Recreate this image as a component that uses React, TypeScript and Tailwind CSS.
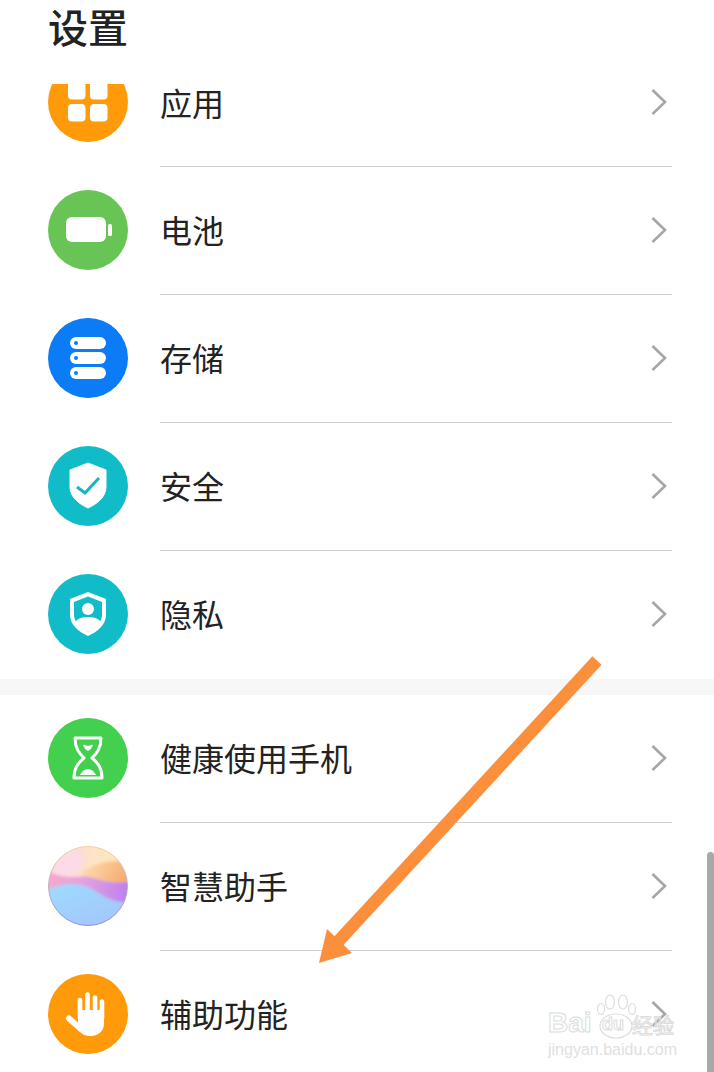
import type { ReactNode } from "react";

const Circle = ({ fill, children }: { fill: string; children: ReactNode }) => (
  <svg width="80" height="80" viewBox="0 0 80 80" className="shrink-0">
    <circle cx="40" cy="40" r="40" fill={fill} />
    {children}
  </svg>
);

const AppsIcon = () => (
  <Circle fill="#ff9a0b">
    <rect x="20" y="20" width="17.5" height="17.5" rx="4" fill="#fff" />
    <rect x="42" y="20" width="17.5" height="17.5" rx="4" fill="#fff" />
    <rect x="20" y="42" width="17.5" height="17.5" rx="4" fill="#fff" />
    <rect x="42" y="42" width="17.5" height="17.5" rx="4" fill="#fff" />
  </Circle>
);

const BatteryIcon = () => (
  <Circle fill="#68c455">
    <rect x="18" y="27" width="40" height="25" rx="6" fill="#fff" />
    <rect x="60" y="34" width="4" height="12" rx="1.5" fill="#fff" />
  </Circle>
);

const StorageIcon = () => (
  <Circle fill="#0b7bf6">
    <rect x="22" y="19" width="36" height="12" rx="6" fill="#fff" />
    <rect x="22" y="34" width="36" height="12" rx="6" fill="#fff" />
    <rect x="22" y="49" width="36" height="12" rx="6" fill="#fff" />
    <circle cx="28" cy="25" r="2" fill="#0b7bf6" />
    <circle cx="28" cy="40" r="2" fill="#0b7bf6" />
    <circle cx="28" cy="55" r="2" fill="#0b7bf6" />
  </Circle>
);

const SecurityIcon = () => (
  <Circle fill="#0fbcc8">
    <path d="M40 17 L58 24 V41 C58 51 49 58 40 62 C31 58 22 51 22 41 V24 Z" fill="#fff" stroke="#fff" strokeWidth="1" strokeLinejoin="round" />
    <path d="M29 41 L37 47 L51 32" fill="none" stroke="#17b5c0" strokeWidth="3" />
  </Circle>
);

const PrivacyIcon = () => (
  <Circle fill="#0fbcc8">
    <path d="M40 18 L58 25 V41 C58 51 49 58 40 62 C31 58 22 51 22 41 V25 Z" fill="#fff" />
    <path d="M40 22.5 L54 28 V41 C54 48 47 54 40 58 C33 54 26 48 26 41 V28 Z" fill="#0fbcc8" />
    <circle cx="40" cy="35" r="6" fill="#fff" />
    <path d="M27 48 C30 44 35 43 40 43 C45 43 50 44 53 48 C50 53 45 56 40 58 C35 56 30 53 27 48 Z" fill="#fff" />
  </Circle>
);

const HourglassIcon = () => (
  <Circle fill="#43d04f">
    <path d="M27 20 H53 C53 30 49 35 44 40 C50 45 54 50 54 60 H26 C26 50 30 45 36 40 C31 35 27 30 27 20 Z" fill="none" stroke="#fff" strokeWidth="3" strokeLinejoin="round" />
    <path d="M35 27 C37 26 38 28 40 28 C42 28 43 26 45 27 C44 30 42 32 40 33 C38 32 36 30 35 27 Z" fill="#fff" />
    <path d="M32 57 C34 53 37 51 40 51 C43 51 46 53 48 57 Z" fill="#fff" />
  </Circle>
);

const AssistantIcon = () => (
  <svg width="80" height="80" viewBox="0 0 80 80" className="shrink-0">
    <defs>
      <clipPath id="orb">
        <circle cx="40" cy="40" r="39.5" />
      </clipPath>
      <filter id="soft" x="-10%" y="-10%" width="120%" height="120%">
        <feGaussianBlur stdDeviation="1.6" />
      </filter>
      <linearGradient id="orbTop" x1="0" y1="0" x2="1" y2="0.2">
        <stop offset="0" stopColor="#fbc9d8" />
        <stop offset="0.55" stopColor="#fde3c8" />
        <stop offset="1" stopColor="#fdeab0" />
      </linearGradient>
      <linearGradient id="orbWarm" x1="0" y1="0" x2="1" y2="0.3">
        <stop offset="0" stopColor="#fce0b4" />
        <stop offset="1" stopColor="#f7a96c" />
      </linearGradient>
      <linearGradient id="orbMid" x1="0" y1="0" x2="1" y2="0">
        <stop offset="0" stopColor="#f8a9c9" />
        <stop offset="0.45" stopColor="#e2a2e0" />
        <stop offset="1" stopColor="#b97cf2" />
      </linearGradient>
      <linearGradient id="orbLow" x1="0" y1="0" x2="0.7" y2="1">
        <stop offset="0" stopColor="#9cdcff" />
        <stop offset="1" stopColor="#a6c4fb" />
      </linearGradient>
      <linearGradient id="orbRim" x1="0" y1="0" x2="0" y2="1">
        <stop offset="0" stopColor="#f0cfa0" />
        <stop offset="1" stopColor="#8f8fd8" />
      </linearGradient>
    </defs>
    <g clipPath="url(#orb)">
      <g filter="url(#soft)">
        <rect x="-4" y="-4" width="88" height="88" fill="url(#orbTop)" />
        <circle cx="18" cy="14" r="17" fill="#fcdbe6" />
        <path d="M34 26 C44 18 62 12 84 17 V46 H34 Z" fill="url(#orbWarm)" />
        <path d="M-4 22 C8 32 24 32 36 30 C50 32 64 40 84 35 V62 H-4 Z" fill="url(#orbMid)" />
        <path d="M-4 46 C12 37 28 36 42 42 C52 48 66 59 84 56 V84 H-4 Z" fill="url(#orbLow)" />
      </g>
    </g>
    <circle cx="40" cy="40" r="39.5" fill="none" stroke="url(#orbRim)" strokeWidth="1" />
  </svg>
);

const HandIcon = () => (
  <Circle fill="#ff9a0b">
    <path d="M30 36 H56 V50 C56 57 50 62 43 62 C37 62 34 60 31 57 L30 50 Z" fill="#fff" />
    <path d="M21 44.5 L33 55" stroke="#fff" strokeWidth="6" strokeLinecap="round" />
    <path d="M32 26 V44" stroke="#fff" strokeWidth="4.6" strokeLinecap="round" />
    <path d="M39.5 20.5 V40" stroke="#fff" strokeWidth="4.6" strokeLinecap="round" />
    <path d="M47 23.5 V40" stroke="#fff" strokeWidth="4.6" strokeLinecap="round" />
    <path d="M54 27.5 V44" stroke="#fff" strokeWidth="4.6" strokeLinecap="round" />
  </Circle>
);

const Chevron = () => (
  <svg width="16" height="26" viewBox="0 0 16 26" className="shrink-0">
    <path d="M1.5 1 L14 13 L1.5 25" fill="none" stroke="#a6a6a6" strokeWidth="2.6" />
  </svg>
);

const Row = ({ icon, label, line = true }: { icon: ReactNode; label: string; line?: boolean }) => (
  <div className="flex h-[128px] shrink-0 pl-12">
    <div className="mt-[23px]">{icon}</div>
    <div className={`ml-8 mr-[42px] flex h-full flex-1 items-center justify-between pb-[2px] pr-[5px] ${line ? "border-b border-[#cfcfcf]" : ""}`}>
      <span className="mb-[2px] text-[32px] leading-none text-[#222]">{label}</span>
      <Chevron />
    </div>
  </div>
);

// the first row is scrolled under the header, only its icon gets cut
const ClippedRow = ({ icon, label }: { icon: ReactNode; label: string }) => (
  <div className="flex h-[83px] pl-12">
    <div className="flex h-[58px] flex-col justify-end overflow-hidden">{icon}</div>
    <div className="ml-8 mr-[42px] flex flex-1 items-start justify-between border-b border-[#cfcfcf] pr-[5px]">
      <span className="mt-[2px] text-[32px] leading-none text-[#222]">{label}</span>
      <div className="mt-[5px]">
        <Chevron />
      </div>
    </div>
  </div>
);

const Arrow = () => (
  <svg width="714" height="1072" viewBox="0 0 714 1072" className="absolute left-0 top-0">
    <path d="M597 660.5 L334 946" stroke="#fb8f3c" strokeWidth="12.5" fill="none" />
    <path d="M319 963 L327 929 L352 953 Z" fill="#fb8f3c" />
  </svg>
);

const Watermark = () => (
  <div className="absolute left-[548px] top-[994px] w-[130px]">
    <svg width="44" height="46" viewBox="0 0 44 46" className="absolute left-[47px] top-0">
      <g fill="#fff" stroke="#dcdcdc" strokeWidth="1.2">
        <ellipse cx="6" cy="15" rx="3.5" ry="5.5" />
        <ellipse cx="15" cy="8" rx="4.5" ry="7" />
        <ellipse cx="28" cy="8" rx="4.5" ry="7" />
        <ellipse cx="37" cy="15" rx="3.5" ry="5.5" />
        <ellipse cx="21" cy="32" rx="16" ry="12" />
      </g>
    </svg>
    <div className="relative flex h-[44px] items-end font-['Liberation_Sans',sans-serif] font-bold text-transparent [-webkit-text-stroke:1px_#dcdcdc]">
      <span className="w-[54px] text-[28px] leading-[30px]">Bai</span>
      <span className="mb-[2px] w-[30px] text-[18px] leading-[24px]">du</span>
      <span className="font-['Noto_Sans_CJK_SC',sans-serif] text-[21px] font-normal leading-[28px] whitespace-nowrap">经验</span>
    </div>
    <div className="mt-[3px] whitespace-nowrap font-['Liberation_Sans',sans-serif] text-[16px] leading-[18px] text-[#e0e0e0]">jingyan.baidu.com</div>
  </div>
);

export default function App() {
  return (
    <div className="relative h-[1072px] w-[714px] overflow-hidden bg-white font-['Noto_Sans_CJK_SC',sans-serif]">
      <div className="flex h-[84px] items-start pl-[48px] pt-[6px]">
        <h1 className="text-[40px] font-medium leading-[40px] text-[#222]">设置</h1>
      </div>
      <ClippedRow icon={<AppsIcon />} label="应用" />
      <Row icon={<BatteryIcon />} label="电池" />
      <Row icon={<StorageIcon />} label="存储" />
      <Row icon={<SecurityIcon />} label="安全" />
      <Row icon={<PrivacyIcon />} label="隐私" line={false} />
      <div className="h-4 bg-[#f7f7f7]" />
      <Row icon={<HourglassIcon />} label="健康使用手机" />
      <Row icon={<AssistantIcon />} label="智慧助手" />
      <Row icon={<HandIcon />} label="辅助功能" line={false} />

      <Arrow />
      <Watermark />
      <div className="absolute right-0 top-[852px] h-[220px] w-[7px] rounded-t-[4px] bg-[#a8a8a8]" />
    </div>
  );
}
